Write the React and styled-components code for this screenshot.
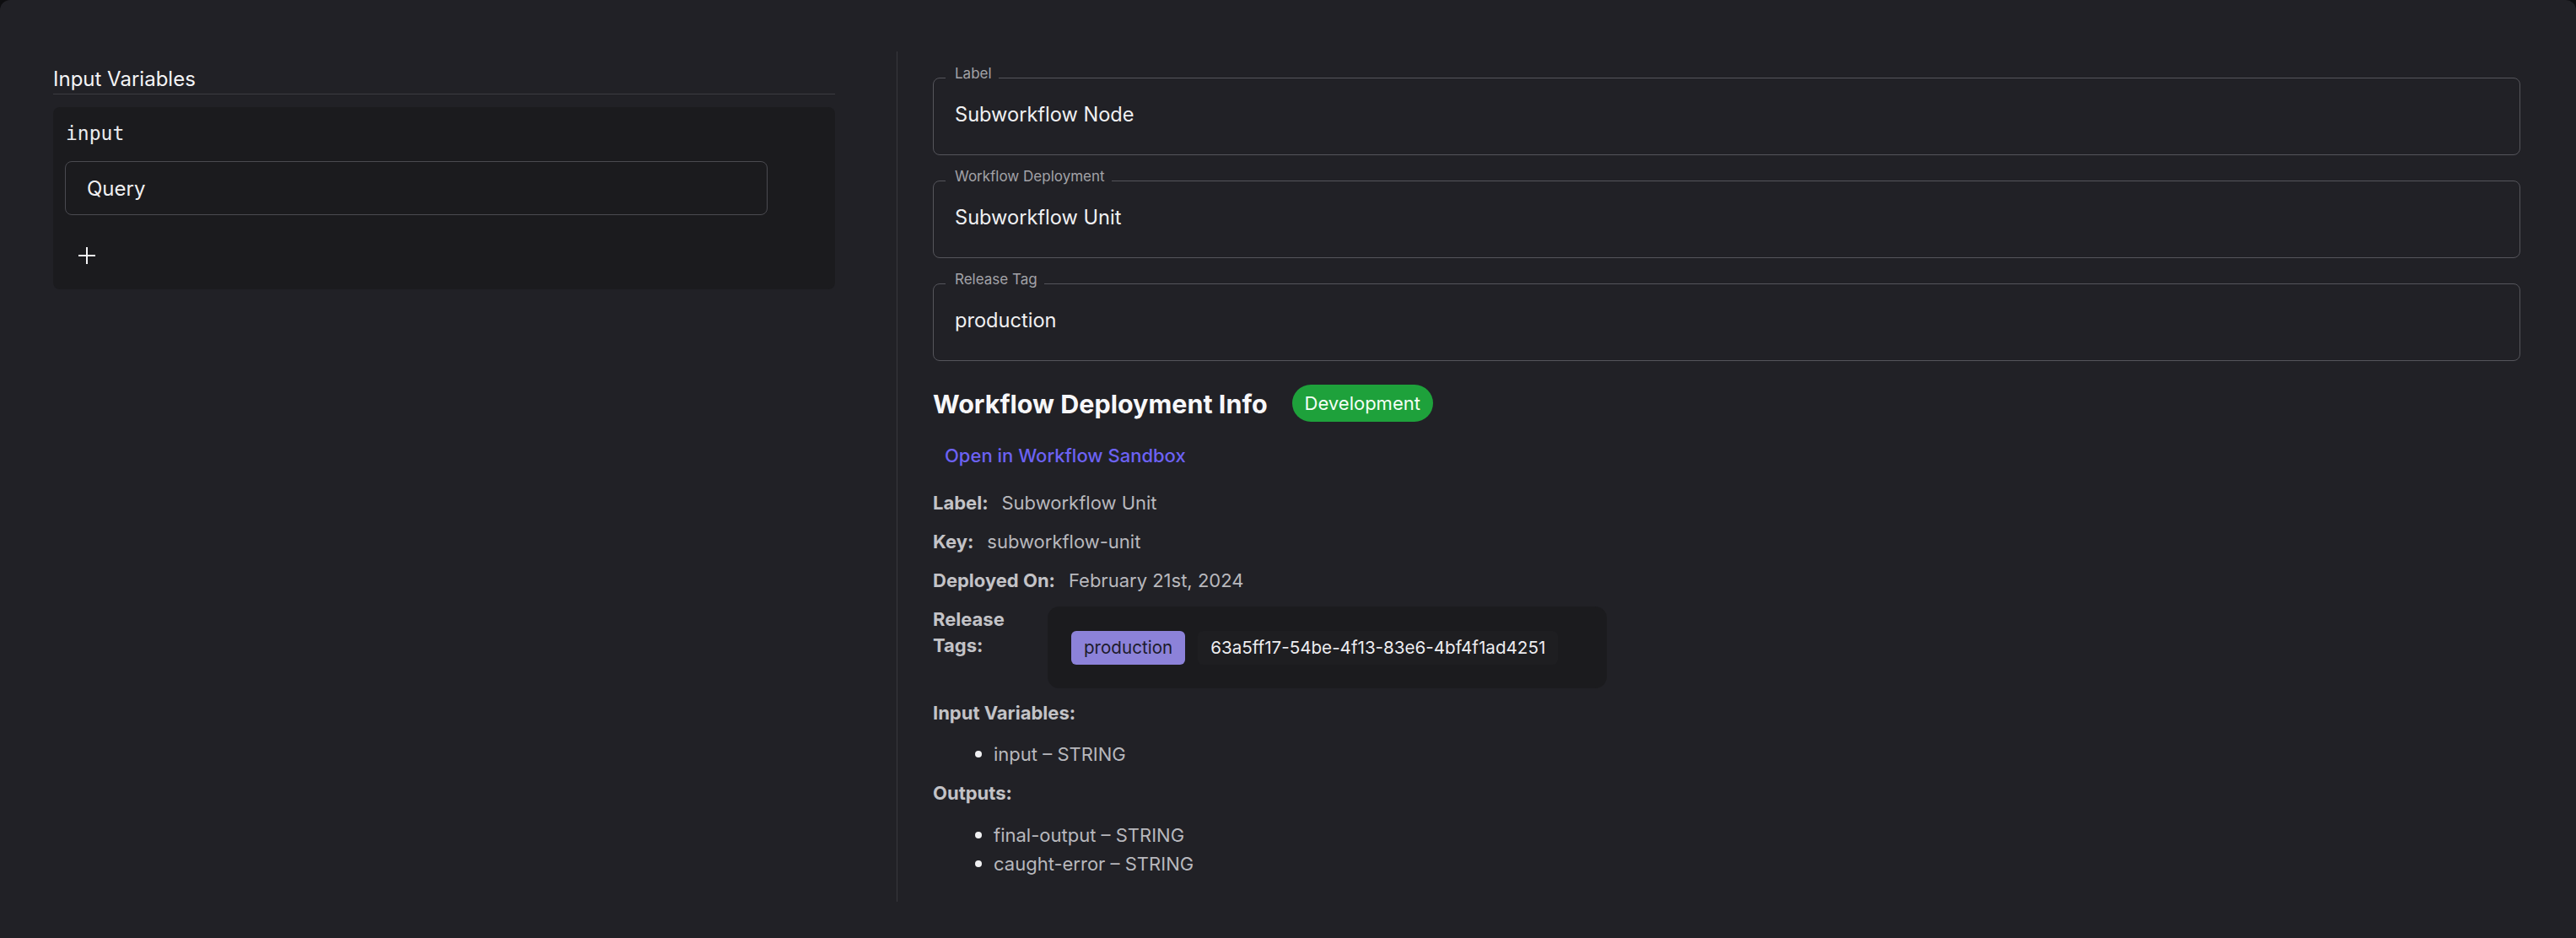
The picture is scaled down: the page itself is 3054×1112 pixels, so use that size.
import React from "react";
import styled, { createGlobalStyle } from "styled-components";

const GlobalStyle = createGlobalStyle`
  html, body {
    margin: 0;
    padding: 0;
    background: #0e0e10;
  }
  body {
    font-family: Inter, "Noto Sans", sans-serif;
    color: #ececef;
  }
  * { box-sizing: border-box; }
`;

const Shell = styled.div`
  display: flex;
  min-height: 100vh;
  padding: 61px 66px 43px 63px;
  background: #212126;
  border-radius: 12px 12px 0 0;
`;

const LeftPane = styled.div`
  width: 927px;
  flex-shrink: 0;
`;

const Divider = styled.div`
  width: 1px;
  margin-left: 73px;
  background: #38383d;
`;

const RightPane = styled.div`
  flex: 1;
  padding: 17px 0 0 42px;
`;

const SectionTitle = styled.div`
  margin-top: 16px;
  font-size: 24px;
  line-height: 34px;
  color: #f4f4f6;
  border-bottom: 1px solid #3c3c41;
`;

const VariableCard = styled.div`
  margin-top: 15px;
  padding: 15px 14px 20px;
  background: #1b1b1e;
  border-radius: 8px;
`;

const VarName = styled.div`
  padding-left: 1px;
  font-family: "DejaVu Sans Mono", "Liberation Mono", monospace;
  font-size: 23px;
  line-height: 32px;
  color: #ececef;
`;

const TextBox = styled.div`
  display: flex;
  align-items: center;
  width: 833px;
  height: 64px;
  margin-top: 17px;
  padding-left: 25px;
  border: 1px solid #4a4a50;
  border-radius: 8px;
  font-size: 24px;
  color: #f0f0f2;
`;

const IconButton = styled.button`
  display: flex;
  align-items: center;
  justify-content: center;
  width: 40px;
  height: 40px;
  margin: 28px 0 0 6px;
  padding: 0;
  background: transparent;
  border: none;
  color: #f4f4f6;
`;

const Field = styled.fieldset`
  margin: 0 0 16px;
  padding: 12px 25px 29px;
  border: 1px solid #55555b;
  border-radius: 8px;
  min-width: 0;
`;

const Legend = styled.legend`
  margin-left: -11px;
  padding: 0 8px 10px 11px;
  font-size: 17px;
  line-height: 18px;
  color: #a3a3a8;
`;

const FieldValue = styled.div`
  font-size: 23.6px;
  line-height: 36px;
  color: #f0f0f2;
`;

const InfoHeader = styled.div`
  display: flex;
  align-items: center;
  gap: 29px;
  height: 44px;
  margin-top: 28px;
`;

const InfoTitle = styled.h2`
  margin: 0;
  font-size: 30.5px;
  font-weight: 700;
  color: #f7f7f9;
`;

const Badge = styled.span`
  display: inline-flex;
  align-items: center;
  height: 44px;
  padding: 0 15px;
  border-radius: 22px;
  background: #1ea13b;
  color: #f4fff6;
  font-size: 22px;
`;

const LinkButton = styled.button`
  display: block;
  height: 40px;
  margin-top: 20px;
  padding: 0 14px;
  background: transparent;
  border: none;
  font-family: inherit;
  font-size: 22px;
  font-weight: 500;
  color: #6c62f4;
`;

const Row = styled.div`
  display: flex;
  align-items: flex-start;
  gap: 16px;
  margin-top: ${(p) => p.$top || 16}px;
  font-size: 22px;
  line-height: 30px;
`;

const Key = styled.span`
  font-weight: 700;
  color: #c3c3c7;
  width: ${(p) => (p.$width ? `${p.$width}px` : "auto")};
  line-height: ${(p) => (p.$width ? "31px" : "30px")};
`;

const Value = styled.span`
  color: #b8b8bd;
`;

const TagPanel = styled.div`
  display: flex;
  gap: 15px;
  padding: 29px 58px 28px 28px;
  background: #1b1b1e;
  border-radius: 14px;
`;

const Chip = styled.span`
  display: inline-flex;
  align-items: center;
  height: 40px;
  padding: 0 15px;
  border-radius: 6px;
  background: ${(p) => (p.$tone === "tag" ? "#8c82d9" : "#1e1e21")};
  color: ${(p) => (p.$tone === "tag" ? "#1d1b2c" : "#ededf0")};
  font-size: 20.6px;
`;

const Heading = styled.div`
  margin-top: ${(p) => p.$top}px;
  font-size: 22px;
  line-height: 30px;
  font-weight: 700;
  color: #c3c3c7;
`;

const List = styled.ul`
  list-style: none;
  margin: ${(p) => p.$top}px 0 14px;
  padding: 0 0 0 72px;
`;

const Item = styled.li`
  position: relative;
  font-size: 22px;
  line-height: 34px;
  color: #b8b8bd;

  &::before {
    content: "";
    position: absolute;
    left: -22px;
    top: 13px;
    width: 8px;
    height: 8px;
    border-radius: 50%;
    background: #f0f0f2;
  }
`;

function PlusIcon() {
  return (
    <svg width="22" height="22" viewBox="0 0 22 22" fill="none" stroke="currentColor" strokeWidth="2">
      <line x1="11" y1="1" x2="11" y2="21" />
      <line x1="1" y1="11" x2="21" y2="11" />
    </svg>
  );
}

const fields = [
  { label: "Label", value: "Subworkflow Node" },
  { label: "Workflow Deployment", value: "Subworkflow Unit" },
  { label: "Release Tag", value: "production" },
];

export default function App() {
  return (
    <>
      <GlobalStyle />
      <Shell>
        <LeftPane>
          <SectionTitle>Input Variables</SectionTitle>
          <VariableCard>
            <VarName>input</VarName>
            <TextBox>Query</TextBox>
            <IconButton aria-label="Add variable">
              <PlusIcon />
            </IconButton>
          </VariableCard>
        </LeftPane>
        <Divider />
        <RightPane>
          {fields.map((f) => (
            <Field key={f.label}>
              <Legend>{f.label}</Legend>
              <FieldValue>{f.value}</FieldValue>
            </Field>
          ))}

          <InfoHeader>
            <InfoTitle>Workflow Deployment Info</InfoTitle>
            <Badge>Development</Badge>
          </InfoHeader>
          <LinkButton>Open in Workflow Sandbox</LinkButton>

          <Row $top={21}>
            <Key>Label:</Key>
            <Value>Subworkflow Unit</Value>
          </Row>
          <Row>
            <Key>Key:</Key>
            <Value>subworkflow-unit</Value>
          </Row>
          <Row>
            <Key>Deployed On:</Key>
            <Value>February 21st, 2024</Value>
          </Row>
          <Row>
            <Key $width={120}>Release Tags:</Key>
            <TagPanel>
              <Chip $tone="tag">production</Chip>
              <Chip>63a5ff17-54be-4f13-83e6-4bf4f1ad4251</Chip>
            </TagPanel>
          </Row>

          <Heading $top={14}>Input Variables:</Heading>
          <List $top={17}>
            <Item>input – STRING</Item>
          </List>
          <Heading $top={0}>Outputs:</Heading>
          <List $top={18}>
            <Item>final-output – STRING</Item>
            <Item>caught-error – STRING</Item>
          </List>
        </RightPane>
      </Shell>
    </>
  );
}
